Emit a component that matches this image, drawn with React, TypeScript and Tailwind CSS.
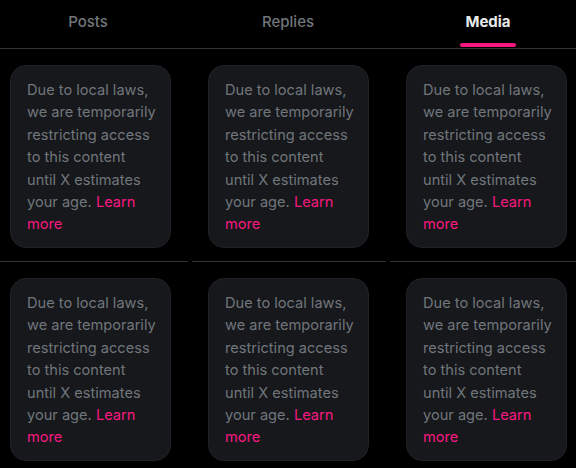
import React from "react";

const TABS = [
  { label: "Posts", active: false },
  { label: "Replies", active: false },
  { label: "Media", active: true },
];

function Notice() {
  return (
    <div className="h-[183px] rounded-2xl border border-[#1f2226] bg-[#16181c] pl-[16px] pr-[13px] pt-[13px] text-[14.6px] leading-[22.4px] text-[#71767b]">
      Due to local laws, we are temporarily restricting access to this content until X estimates your age.{" "}
      <span className="text-[#f91880]">Learn more</span>
    </div>
  );
}

export default function App() {
  return (
    <div
      className="h-[468px] w-[576px] overflow-hidden bg-black"
      style={{ fontFamily: '"Inter", "Liberation Sans", sans-serif' }}
    >
      <div className="h-[49px] border-b border-[#2f3336]">
        <div className="-ml-[12px] flex h-12 w-[600px]">
          {TABS.map((t) => (
            <div key={t.label} className="relative flex flex-1 items-center justify-center pb-[4px]">
              <span
                className={
                  t.active
                    ? "text-[15px] font-bold text-[#e7e9ea]"
                    : "text-[15px] font-medium text-[#71767b]"
                }
              >
                {t.label}
              </span>
              {t.active ? (
                <div className="absolute bottom-[1px] left-1/2 h-[4px] w-[56px] -translate-x-1/2 rounded-full bg-[#f91880]" />
              ) : null}
            </div>
          ))}
        </div>
      </div>

      <div className="-ml-[6px] grid w-[590px] grid-cols-3 gap-x-1">
        {Array.from({ length: 6 }).map((_, i) => (
          <div key={i} className="border-b border-[#2f3336] pb-[13px] pl-4 pr-[17px] pt-4">
            <Notice />
          </div>
        ))}
      </div>
    </div>
  );
}
